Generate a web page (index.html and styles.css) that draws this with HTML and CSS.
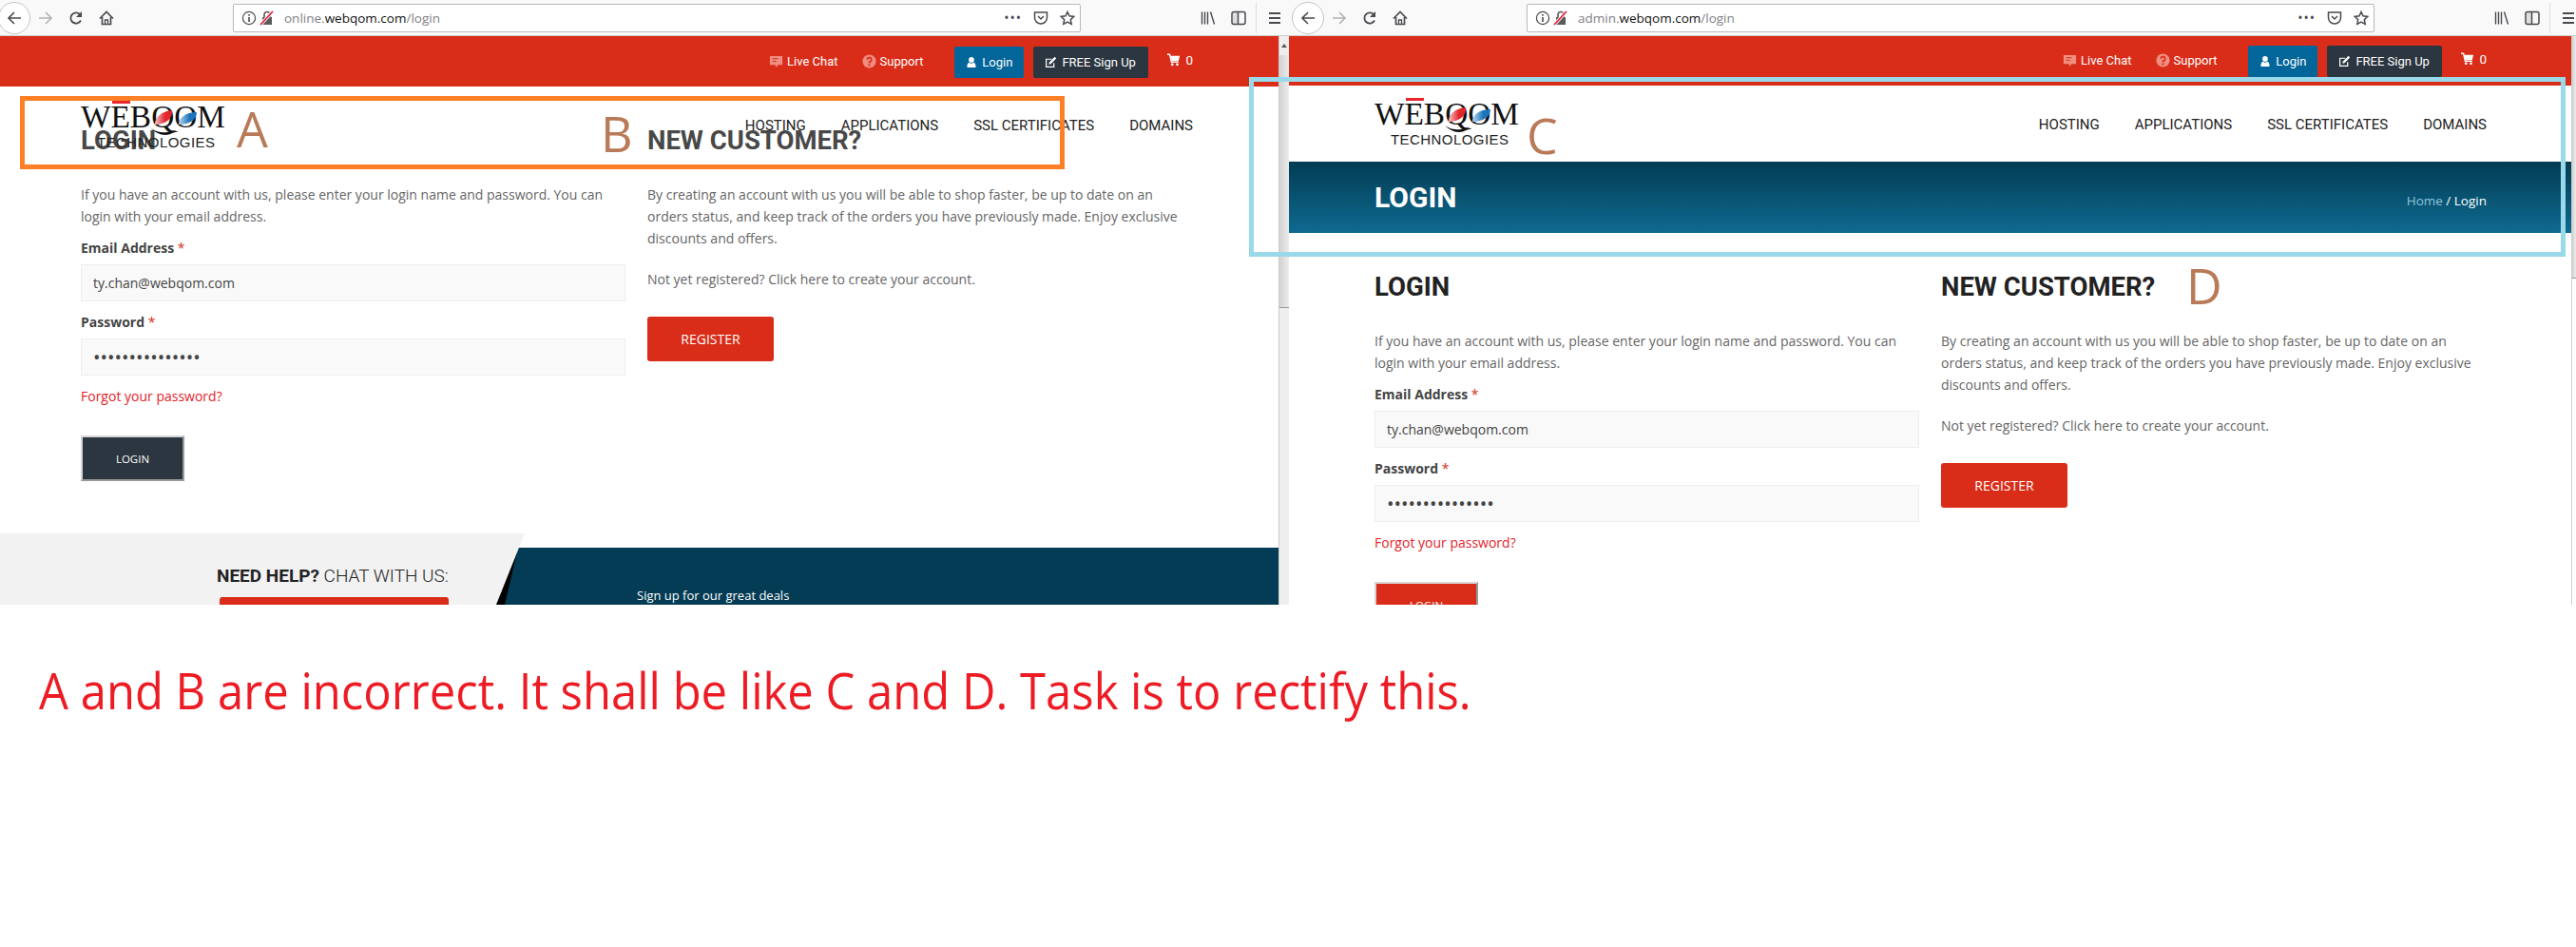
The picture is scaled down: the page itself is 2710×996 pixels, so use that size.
FILE: index.html

```html
<!DOCTYPE html>
<html lang="en">
<head>
  <meta charset="UTF-8" />
  <title>Login header comparison</title>
  <link rel="stylesheet" href="styles.css">
</head>
<body>

  <svg class="defs" width="0" height="0">
    <linearGradient id="leaf-red" x1="0" x2="1" y1="0" y2="0"><stop offset="0" stop-color="#f6c4c4"/><stop offset=".6" stop-color="#e2262c"/></linearGradient>
    <linearGradient id="leaf-blue" x1="0" x2="1" y1="0" y2="0"><stop offset="0" stop-color="#bcd8ee"/><stop offset=".6" stop-color="#1b75bb"/></linearGradient>
    <symbol id="i-back" viewBox="0 0 16 16"><path d="M15 8H2M8 2 2 8l6 6" fill="none" stroke="currentColor" stroke-width="1.6"/></symbol>
    <symbol id="i-fwd" viewBox="0 0 16 16"><path d="M1 8h13M8 2l6 6-6 6" fill="none" stroke="currentColor" stroke-width="1.6"/></symbol>
    <symbol id="i-reload" viewBox="0 0 16 16"><path d="M13 10.5A5.6 5.6 0 1 1 12 4" fill="none" stroke="currentColor" stroke-width="1.8"/><path d="M14 1v6H8z" fill="currentColor"/></symbol>
    <symbol id="i-home" viewBox="0 0 16 16"><path d="M1 8.5 8 1.5l7 7M3.5 7v7.5h9V7" fill="none" stroke="currentColor" stroke-width="1.7"/><path d="M6.5 14.5V10h3v4.5" fill="none" stroke="currentColor" stroke-width="1.3"/></symbol>
    <symbol id="i-info" viewBox="0 0 16 16"><circle cx="8" cy="8" r="6.6" fill="none" stroke="currentColor" stroke-width="1.2"/><path d="M7.2 7h1.6v5H7.2zM7.2 4h1.6v1.7H7.2z" fill="currentColor"/></symbol>
    <symbol id="i-lock" viewBox="0 0 16 16"><path d="M3 7h10v8H3z" fill="#5b5b5e"/><path d="M5 7V4.5a3 3 0 0 1 6 0V7" fill="none" stroke="#5b5b5e" stroke-width="1.6"/><path d="M1 15 14 1" stroke="#f9f9fa" stroke-width="3.4"/><path d="M1 15 14 1" stroke="#e8203f" stroke-width="1.8"/></symbol>
    <symbol id="i-pocket" viewBox="0 0 16 16"><path d="M1.5 2h13v5.5a6.500 6.500 0 0 1-13 0z" fill="none" stroke="currentColor" stroke-width="1.5"/><path d="m5 6 3 3 3-3" fill="none" stroke="currentColor" stroke-width="1.5"/></symbol>
    <symbol id="i-star" viewBox="0 0 16 16"><path d="m8 1.5 2 4.3 4.7.6-3.4 3.300.9 4.700L8 12.100l-4.200 2.300.9-4.700L1.300 6.400 6 5.800z" fill="none" stroke="currentColor" stroke-width="1.5"/></symbol>
    <symbol id="i-library" viewBox="0 0 16 16"><path d="M1.5 1.500v13M4.500 1.500v13M7.500 1.500v13M10.500 1.500l4 13" fill="none" stroke="currentColor" stroke-width="1.4"/></symbol>
    <symbol id="i-sidebar" viewBox="0 0 16 16"><rect x="1" y="1.5" width="14" height="13" rx="2" fill="none" stroke="currentColor" stroke-width="1.5"/><path d="M2 2h5v12H2z" fill="currentColor" opacity=".15"/><path d="M7.5 2v12" stroke="currentColor" stroke-width="1.5"/></symbol>
    <symbol id="i-menu" viewBox="0 0 16 16"><path d="M2 3h12M2 8h12M2 13h12" stroke="currentColor" stroke-width="1.8"/></symbol>
    <symbol id="i-chat" viewBox="0 0 16 16"><path d="M1 2h14v10h-5l-2 3-1-3H1z" fill="currentColor"/><path d="M4 5h6M4 8h4" stroke="#d92d19" stroke-width="1.2"/></symbol>
    <symbol id="i-help" viewBox="0 0 16 16"><circle cx="8" cy="8" r="7.5" fill="currentColor"/><path d="M5.600 6.200A2.400 2.400 0 1 1 8 8.700v1.500" fill="none" stroke="#d92d19" stroke-width="1.7"/><path d="M7 11.200h2v2H7z" fill="#d92d19"/></symbol>
    <symbol id="i-user" viewBox="0 0 16 16"><circle cx="8" cy="4.500" r="3.800" fill="currentColor"/><path d="M2 15.500v-3.500a4 4 0 0 1 3-3.600 4.500 4.500 0 0 0 6 0 4 4 0 0 1 3 3.600v3.500z" fill="currentColor"/></symbol>
    <symbol id="i-edit" viewBox="0 0 16 16"><path d="M12 9v5H2V4h7" fill="none" stroke="currentColor" stroke-width="1.5"/><path d="M6 8l7-7 2 2-7 7-2.700.7z" fill="currentColor"/></symbol>
    <symbol id="i-cart" viewBox="0 0 16 16"><path d="M0 1.500h3l2 9h8.500" fill="none" stroke="currentColor" stroke-width="1.6"/><path d="M4 3h11l-1.500 6H5.200z" fill="currentColor"/><circle cx="6" cy="13.500" r="1.600" fill="currentColor"/><circle cx="12" cy="13.500" r="1.600" fill="currentColor"/></symbol>
  </svg>

  <div class="windows">

    <section class="win win-left">
      <div class="toolbar">
        <span class="back"><svg><use href="#i-back"/></svg></span>
        <svg class="ico fwd muted"><use href="#i-fwd"/></svg>
        <svg class="ico"><use href="#i-reload"/></svg>
        <svg class="ico"><use href="#i-home"/></svg>
        <div class="urlbar">
          <svg class="ico"><use href="#i-info"/></svg>
          <svg class="ico"><use href="#i-lock"/></svg>
          <span class="url">online.<b>webqom.com</b>/login</span>
          <span class="dots">•••</span>
          <svg class="ico"><use href="#i-pocket"/></svg>
          <svg class="ico"><use href="#i-star"/></svg>
        </div>
        <svg class="ico lib"><use href="#i-library"/></svg>
        <svg class="ico"><use href="#i-sidebar"/></svg>
        <span class="sep"></span>
        <svg class="ico"><use href="#i-menu"/></svg>
      </div>
      <div class="win-body">
        <div class="page page-left">
          <div class="topbar">
            <div class="container topbar-in">
              <a class="top-link"><svg><use href="#i-chat"/></svg>Live Chat</a>
              <a class="top-link"><svg><use href="#i-help"/></svg>Support</a>
              <a class="top-btn btn-blue"><svg><use href="#i-user"/></svg>Login</a>
              <a class="top-btn btn-dark"><svg><use href="#i-edit"/></svg>FREE Sign Up</a>
              <a class="cart"><svg><use href="#i-cart"/></svg>0</a>
            </div>
          </div>
          <header class="header">
            <div class="container header-in">
              <svg class="logo" viewBox="0 0 152 50">
                <path d="M33 0h19v3H33z" fill="#e8262c"/>
                <text class="logo-word" x="0" y="28" textLength="152" lengthAdjust="spacingAndGlyphs">WEBQOM</text>
                <path d="M78 25c0-8 7-14 18-15 1 8-6 15-18 15z" fill="url(#leaf-red)"/>
                <path d="M103 25c0-7 7-13 19-13 0 7-7 13-19 13z" fill="url(#leaf-blue)"/>
                <path d="M74 29c7 5 15 5 20 3 5-2 7 0 9 1-5-1-8 3-14 3-6 0-11-3-15-7z" fill="#111"/>
                <text class="logo-sub" x="79" y="49" text-anchor="middle" textLength="124" lengthAdjust="spacing">TECHNOLOGIES</text>
              </svg>
              <nav class="nav">
                <a>HOSTING</a><a>APPLICATIONS</a><a>SSL CERTIFICATES</a><a>DOMAINS</a>
              </nav>
            </div>
          </header>
          <main class="container content">
            <div class="col">
              <h2>LOGIN</h2>
              <p>If you have an account with us, please enter your login name and password. You can login with your email address.</p>
              <label>Email Address <i>*</i></label>
              <input type="text" value="ty.chan@webqom.com">
              <label>Password <i>*</i></label>
              <input type="password" value="aaaaaaaaaaaaaaa">
              <a class="forgot">Forgot your password?</a>
              <button class="btn-login">LOGIN</button>
            </div>
            <div class="col">
              <h2>NEW CUSTOMER?</h2>
              <p>By creating an account with us you will be able to shop faster, be up to date on an orders status, and keep track of the orders you have previously made. Enjoy exclusive discounts and offers.</p>
              <p class="not-yet">Not yet registered? Click here to create your account.</p>
              <button class="btn-register">REGISTER</button>
            </div>
          </main>
          <footer class="footer">
            <div class="help">
              <div class="help-in">
                <div class="help-title"><b>NEED HELP?</b> CHAT WITH US:</div>
                <div class="help-btn"></div>
              </div>
            </div>
            <div class="deals">
              <div class="deals-in">Sign up for our great deals</div>
            </div>
          </footer>
        </div>
        <div class="scrollbar">
          <span class="scroll-up"></span>
          <span class="thumb"></span>
        </div>
      </div>
    </section>

    <section class="win win-right">
      <div class="toolbar">
        <span class="back"><svg><use href="#i-back"/></svg></span>
        <svg class="ico fwd muted"><use href="#i-fwd"/></svg>
        <svg class="ico"><use href="#i-reload"/></svg>
        <svg class="ico"><use href="#i-home"/></svg>
        <div class="urlbar">
          <svg class="ico"><use href="#i-info"/></svg>
          <svg class="ico"><use href="#i-lock"/></svg>
          <span class="url">admin.<b>webqom.com</b>/login</span>
          <span class="dots">•••</span>
          <svg class="ico"><use href="#i-pocket"/></svg>
          <svg class="ico"><use href="#i-star"/></svg>
        </div>
        <svg class="ico lib"><use href="#i-library"/></svg>
        <svg class="ico"><use href="#i-sidebar"/></svg>
        <span class="sep"></span>
        <svg class="ico"><use href="#i-menu"/></svg>
      </div>
      <div class="win-body">
        <div class="page page-right">
          <div class="topbar">
            <div class="container topbar-in">
              <a class="top-link"><svg><use href="#i-chat"/></svg>Live Chat</a>
              <a class="top-link"><svg><use href="#i-help"/></svg>Support</a>
              <a class="top-btn btn-blue"><svg><use href="#i-user"/></svg>Login</a>
              <a class="top-btn btn-dark"><svg><use href="#i-edit"/></svg>FREE Sign Up</a>
              <a class="cart"><svg><use href="#i-cart"/></svg>0</a>
            </div>
          </div>
          <header class="header">
            <div class="container header-in">
              <svg class="logo" viewBox="0 0 152 50">
                <path d="M33 0h19v3H33z" fill="#e8262c"/>
                <text class="logo-word" x="0" y="28" textLength="152" lengthAdjust="spacingAndGlyphs">WEBQOM</text>
                <path d="M78 25c0-8 7-14 18-15 1 8-6 15-18 15z" fill="url(#leaf-red)"/>
                <path d="M103 25c0-7 7-13 19-13 0 7-7 13-19 13z" fill="url(#leaf-blue)"/>
                <path d="M74 29c7 5 15 5 20 3 5-2 7 0 9 1-5-1-8 3-14 3-6 0-11-3-15-7z" fill="#111"/>
                <text class="logo-sub" x="79" y="49" text-anchor="middle" textLength="124" lengthAdjust="spacing">TECHNOLOGIES</text>
              </svg>
              <nav class="nav">
                <a>HOSTING</a><a>APPLICATIONS</a><a>SSL CERTIFICATES</a><a>DOMAINS</a>
              </nav>
            </div>
          </header>
          <div class="banner">
            <div class="container banner-in">
              <h1>LOGIN</h1>
              <div class="crumbs"><a>Home</a> / Login</div>
            </div>
          </div>
          <main class="container content">
            <div class="col">
              <h2>LOGIN</h2>
              <p>If you have an account with us, please enter your login name and password. You can login with your email address.</p>
              <label>Email Address <i>*</i></label>
              <input type="text" value="ty.chan@webqom.com">
              <label>Password <i>*</i></label>
              <input type="password" value="aaaaaaaaaaaaaaa">
              <a class="forgot">Forgot your password?</a>
              <button class="btn-login">LOGIN</button>
            </div>
            <div class="col">
              <h2>NEW CUSTOMER?</h2>
              <p>By creating an account with us you will be able to shop faster, be up to date on an orders status, and keep track of the orders you have previously made. Enjoy exclusive discounts and offers.</p>
              <p class="not-yet">Not yet registered? Click here to create your account.</p>
              <button class="btn-register">REGISTER</button>
            </div>
          </main>
        </div>
        <div class="scrollbar scrollbar-cut">
          <span class="thumb"></span>
        </div>
      </div>
    </section>

  </div>

  <p class="caption"><span>A and B are incorrect. It shall be like C and D. Task is to rectify this.</span></p>

  <!-- marks drawn over the screenshots -->
  <div class="mark mark-orange"></div>
  <div class="mark mark-blue"></div>
  <span class="letter letter-a">A</span>
  <span class="letter letter-b">B</span>
  <span class="letter letter-c">C</span>
  <span class="letter letter-d">D</span>

</body>
</html>
```

FILE: styles.css

```css
html, body {
  margin: 0;
  width: 2710px;
  height: 996px;
  overflow: hidden;
  background-color: #fff;
}
body {
  position: relative;
  font-family: "Open Sans", sans-serif;
  font-size: 14px;
  color: #666;
}
.defs {
  position: absolute;
}
a {
  text-decoration: none;
}

/* browser windows */
.windows {
  display: flex;
  height: 636px;
  overflow: hidden;
}
.win {
  overflow: hidden;
}
.win-left {
  width: 1356px;
}
.win-right {
  width: 1354px;
}
.win-right .toolbar {
  padding-left: 5px;
}
.toolbar {
  display: flex;
  align-items: center;
  height: 37px;
  background-color: #f9f9fa;
  border-bottom: 1px solid #ccc;
  color: #4a4a4f;
}
.back {
  display: flex;
  align-items: center;
  justify-content: center;
  flex: none;
  width: 32px;
  height: 32px;
  margin-left: -2px;
  border: 1px solid #c4c4c4;
  border-radius: 50%;
  background-color: #fff;
}
.back svg {
  width: 16px;
  height: 16px;
}
.ico {
  flex: none;
  width: 16px;
  height: 16px;
  margin-left: 16px;
}
.fwd {
  margin-left: 8px;
}
.muted {
  color: #b1b1b3;
}
.urlbar {
  display: flex;
  align-items: center;
  flex: none;
  box-sizing: border-box;
  width: 892px;
  height: 30px;
  margin-left: 125px;
  padding: 0 5px 0 8px;
  background-color: #fff;
  border: 1px solid #b9b9bb;
  border-radius: 2px;
}
.urlbar .ico {
  margin-left: 12px;
}
.urlbar .ico:first-child {
  margin-left: 0;
}
.urlbar .ico:nth-child(2) {
  margin-left: 3px;
}
.url {
  flex: 1;
  margin-left: 10px;
  font-size: 13.5px;
  color: #808084;
}
.url b {
  font-weight: 400;
  color: #111;
}
.dots {
  font-size: 14px;
  letter-spacing: 1px;
  color: #4a4a4f;
}
.lib {
  margin-left: 126px;
}
.sep {
  flex: none;
  width: 1px;
  height: 32px;
  margin: 0 0 0 10px;
  background-color: #ddd;
}
.sep + .ico {
  margin-left: 11px;
}
.win-body {
  display: flex;
  height: 598px;
}
.page {
  position: relative;
  flex: 1;
  min-width: 0;
  overflow: hidden;
  background-color: #fff;
}
.scrollbar {
  position: relative;
  flex: none;
  width: 11px;
  background-color: #eee;
  border-left: 1px solid #ccc;
  box-sizing: border-box;
}
.scrollbar-cut {
  width: 5px;
  background-color: #fff;
}
.scroll-up {
  display: block;
  margin: 5px auto 0;
  width: 0;
  border: 3px solid transparent;
  border-bottom: 4px solid #555;
}
.thumb {
  position: absolute;
  top: 20px;
  left: 0;
  right: 0;
  height: 265px;
  background: linear-gradient(to right, #d2d2d2, #ececec);
  border-bottom: 1px solid #999;
}
.scrollbar-cut .thumb {
  top: 0;
  height: 254px;
}

/* site */
.container {
  width: 1170px;
}
.page-left .container {
  margin-left: 85px;
}
.page-right .container {
  margin-left: 90px;
}
.topbar {
  height: 53px;
  background-color: #d92d19;
}
.page-right .topbar {
  height: 52px;
}
.topbar-in {
  display: flex;
  align-items: flex-start;
  justify-content: flex-end;
  padding-top: 11px;
  font-family: Roboto, sans-serif;
  color: #fff;
}
.page-right .topbar-in {
  padding-top: 10px;
}
.top-link {
  display: flex;
  align-items: center;
  height: 30px;
  margin-right: 24px;
  font-size: 13px;
  color: #fff;
}
.top-link svg {
  width: 15px;
  height: 15px;
  margin-right: 4px;
  color: #ef8d80;
}
.top-link + .top-btn {
  margin-left: 9px;
}
.top-btn {
  display: flex;
  align-items: center;
  box-sizing: border-box;
  height: 33px;
  padding: 0 12px;
  border-radius: 2px;
  font-size: 13px;
  color: #fff;
}
.top-btn svg {
  width: 13px;
  height: 13px;
  margin-right: 5px;
}
.btn-blue {
  width: 73px;
  background-color: #03669a;
}
.btn-dark {
  width: 121px;
  margin-left: 10px;
  background-color: #2b3640;
}
.cart {
  display: flex;
  align-items: center;
  height: 28px;
  margin-left: 20px;
  font-size: 13.5px;
  color: #fff;
}
.cart svg {
  width: 14px;
  height: 14px;
  margin-right: 5px;
}
.header {
  height: 80px;
  background-color: #fff;
}
.page-left .header {
  position: absolute;
  top: 55px;
  left: 0;
  right: 0;
  height: 76px;
  background-color: transparent;
}
.header-in {
  display: flex;
  align-items: center;
  justify-content: space-between;
  height: 100%;
}
.logo {
  align-self: flex-start;
  width: 152px;
  height: 50px;
  margin-top: 13px;
}
.logo-word {
  font-family: "Liberation Serif", serif;
  font-size: 34px;
  fill: #111;
}
.logo-sub {
  font-family: "Liberation Sans", sans-serif;
  font-size: 15px;
  fill: #222;
}
.nav {
  display: flex;
  gap: 37px;
  padding-top: 2px;
  font-family: Roboto, sans-serif;
  font-size: 15px;
  color: #222;
}
.banner {
  height: 75px;
  background: linear-gradient(to bottom, #033c54, #0e6a90);
}
.banner-in {
  display: flex;
  align-items: center;
  justify-content: space-between;
  height: 100%;
}
.banner h1 {
  margin: 0;
  padding-bottom: 1px;
  font-family: Roboto, sans-serif;
  font-size: 30px;
  font-weight: 700;
  color: #fff;
}
.crumbs {
  padding-top: 7px;
  font-size: 13.5px;
  color: #fff;
}
.crumbs a {
  color: #8fc6dc;
}

/* login form */
.content {
  display: grid;
  grid-template-columns: 573px 573px;
  column-gap: 23px;
  padding-top: 42px;
}
.col h2 {
  margin: 0 0 30px;
  font-family: Roboto, sans-serif;
  font-size: 27.5px;
  line-height: 30px;
  font-weight: 700;
  color: #222;
}
.page-left h2 {
  color: #484848;
}
.col p {
  margin: 0;
  line-height: 23px;
}
.col .not-yet {
  margin-top: 20px;
}
.col label {
  display: block;
  margin: 12px 0 7px;
  line-height: 20px;
  font-weight: 700;
  color: #444;
}
.col label i {
  font-style: normal;
  font-weight: 400;
  color: #d92d19;
}
.col input {
  display: block;
  box-sizing: border-box;
  width: 573px;
  height: 39px;
  padding: 0 12px;
  background-color: #f9f9f9;
  border: 1px solid #eee;
  font-family: "Open Sans", sans-serif;
  font-size: 14px;
  color: #444;
}
.col input[type="password"] {
  font-size: 20px;
}
.forgot {
  display: block;
  margin-top: 10px;
  line-height: 23px;
  color: #e3222a;
}
.btn-login, .btn-register {
  display: block;
  font-family: "Open Sans", sans-serif;
  color: #fff;
  cursor: pointer;
}
.btn-login {
  box-sizing: border-box;
  width: 109px;
  height: 48px;
  margin-top: 30px;
  background-color: #d92d19;
  border: 2px solid #d5d5d5;
  border-right-color: #999;
  border-bottom-color: #999;
  font-size: 11.5px;
}
.page-left .btn-login {
  background-color: #2b3640;
}
.btn-register {
  width: 133px;
  height: 47px;
  margin-top: 28px;
  background-color: #d92d19;
  border: 0;
  border-radius: 3px;
  font-size: 14px;
}

/* footer of the left page, cut by the window */
.footer {
  display: flex;
  margin-top: 55px;
  height: 75px;
}
.help {
  position: relative;
  z-index: 1;
  flex: none;
  width: 552px;
  background-color: #f2f2f2;
  clip-path: polygon(0 0, 100% 0, 522px 100%, 0 100%);
}
.help-in {
  width: 244px;
  margin-left: 228px;
  padding-top: 34px;
}
.help-title {
  font-family: Roboto, sans-serif;
  font-size: 19px;
  line-height: 22px;
  font-weight: 300;
  color: #222;
  white-space: nowrap;
}
.help-title b {
  font-weight: 700;
}
.help-btn {
  height: 20px;
  margin: 11px 0 0 3px;
  background-color: #d92d19;
  border-radius: 3px 3px 0 0;
}
.deals {
  flex: 1;
  margin: 15px 0 0 -52px;
  background-color: #000;
}
.deals-in {
  box-sizing: border-box;
  height: 60px;
  padding: 40px 0 0 170px;
  background-color: #033c54;
  clip-path: polygon(45px 0, 100% 0, 100% 100%, 31px 100%);
  font-size: 13px;
  line-height: 20px;
  color: #fff;
}

/* note under the screenshots */
.caption {
  margin: 60px 0 0 41px;
  line-height: 60px;
  font-size: 53px;
  color: #ed1c24;
  white-space: nowrap;
}
.caption span {
  display: inline-block;
  transform: scaleX(.924);
  transform-origin: left center;
}

/* annotation marks */
.mark {
  position: absolute;
  box-sizing: border-box;
  border: 5px solid;
}
.mark-orange {
  left: 21px;
  top: 101px;
  width: 1099px;
  height: 77px;
  border-color: #ff7f27;
}
.mark-blue {
  left: 1314px;
  top: 81px;
  width: 1385px;
  height: 189px;
  border-color: #99d9ea;
}
.letter {
  position: absolute;
  font-size: 52px;
  font-weight: 400;
  line-height: 52px;
  color: #b97a57;
}
.letter-a {
  left: 249px;
  top: 109px;
}
.letter-b {
  left: 632px;
  top: 114px;
}
.letter-c {
  left: 1606px;
  top: 116px;
}
.letter-d {
  left: 2300px;
  top: 274px;
}
.top-link:nth-child(2) {
  margin-right: 33px;
}
.top-link + .top-btn {
  margin-left: 0;
}
.top-link:first-child {
  margin-right: 25px;
}
```
